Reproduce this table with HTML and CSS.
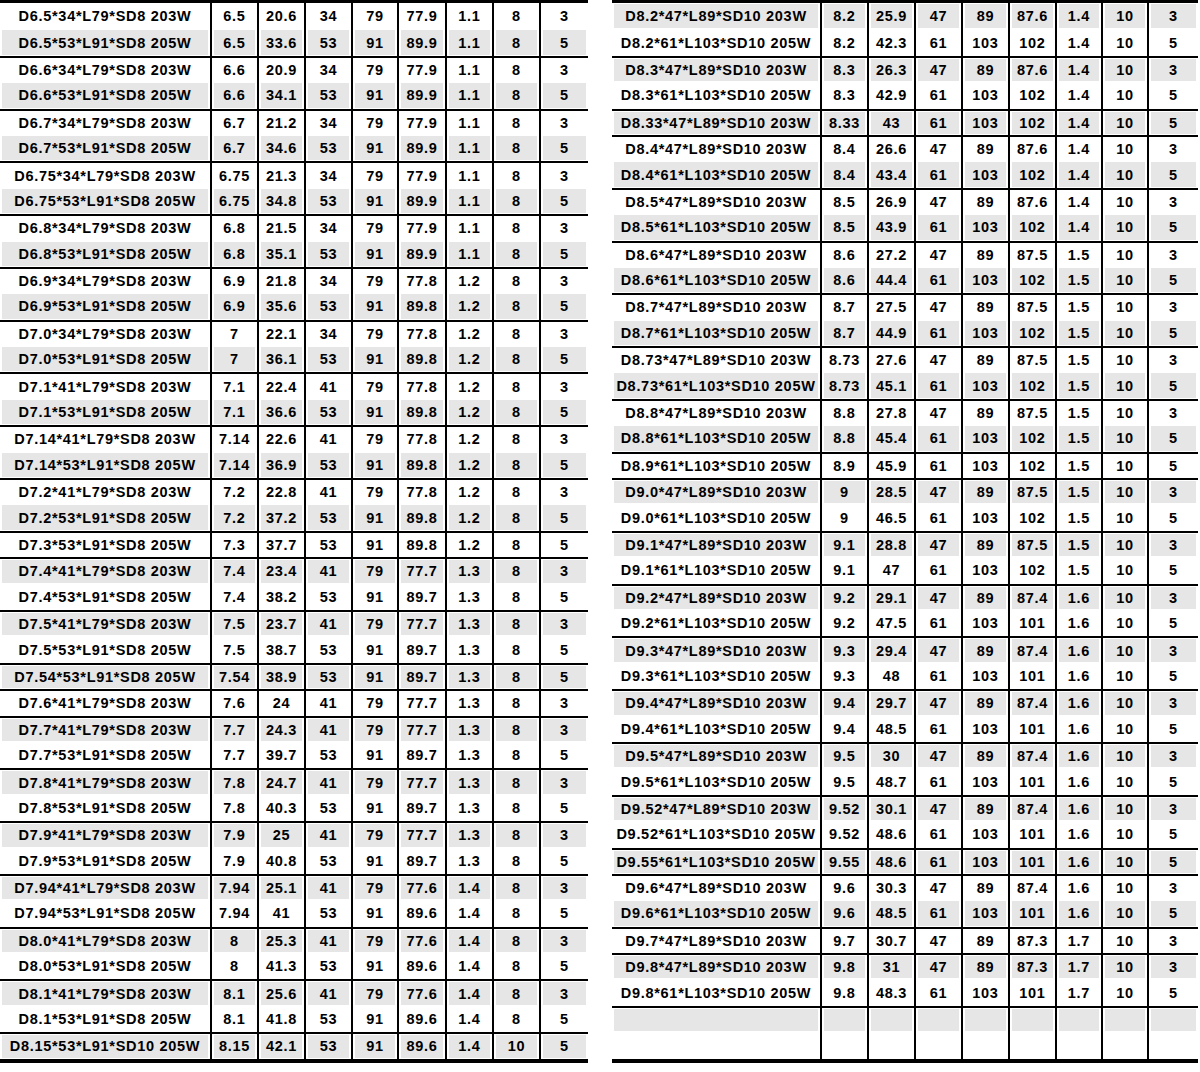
FILE: index.html
```html
<!DOCTYPE html>
<html lang="en">
<head>
<meta charset="utf-8">
<title>Spec table</title>
<link rel="stylesheet" href="styles.css">
</head>
<body>
<div class="page">
<table class="spec spec-left">
<colgroup><col class="c1"><col class="c2"><col class="c3"><col class="c4"><col class="c5"><col class="c6"><col class="c7"><col class="c8"><col class="c9"></colgroup>
<tbody>
<tr><td>D6.5*34*L79*SD8 203W</td><td>6.5</td><td>20.6</td><td>34</td><td>79</td><td>77.9</td><td>1.1</td><td>8</td><td>3</td></tr>
<tr class="s"><td>D6.5*53*L91*SD8 205W</td><td>6.5</td><td>33.6</td><td>53</td><td>91</td><td>89.9</td><td>1.1</td><td>8</td><td>5</td></tr>
<tr class="g"><td>D6.6*34*L79*SD8 203W</td><td>6.6</td><td>20.9</td><td>34</td><td>79</td><td>77.9</td><td>1.1</td><td>8</td><td>3</td></tr>
<tr class="s"><td>D6.6*53*L91*SD8 205W</td><td>6.6</td><td>34.1</td><td>53</td><td>91</td><td>89.9</td><td>1.1</td><td>8</td><td>5</td></tr>
<tr class="g"><td>D6.7*34*L79*SD8 203W</td><td>6.7</td><td>21.2</td><td>34</td><td>79</td><td>77.9</td><td>1.1</td><td>8</td><td>3</td></tr>
<tr class="s"><td>D6.7*53*L91*SD8 205W</td><td>6.7</td><td>34.6</td><td>53</td><td>91</td><td>89.9</td><td>1.1</td><td>8</td><td>5</td></tr>
<tr class="g"><td>D6.75*34*L79*SD8 203W</td><td>6.75</td><td>21.3</td><td>34</td><td>79</td><td>77.9</td><td>1.1</td><td>8</td><td>3</td></tr>
<tr class="s"><td>D6.75*53*L91*SD8 205W</td><td>6.75</td><td>34.8</td><td>53</td><td>91</td><td>89.9</td><td>1.1</td><td>8</td><td>5</td></tr>
<tr class="g"><td>D6.8*34*L79*SD8 203W</td><td>6.8</td><td>21.5</td><td>34</td><td>79</td><td>77.9</td><td>1.1</td><td>8</td><td>3</td></tr>
<tr class="s"><td>D6.8*53*L91*SD8 205W</td><td>6.8</td><td>35.1</td><td>53</td><td>91</td><td>89.9</td><td>1.1</td><td>8</td><td>5</td></tr>
<tr class="g"><td>D6.9*34*L79*SD8 203W</td><td>6.9</td><td>21.8</td><td>34</td><td>79</td><td>77.8</td><td>1.2</td><td>8</td><td>3</td></tr>
<tr class="s"><td>D6.9*53*L91*SD8 205W</td><td>6.9</td><td>35.6</td><td>53</td><td>91</td><td>89.8</td><td>1.2</td><td>8</td><td>5</td></tr>
<tr class="g"><td>D7.0*34*L79*SD8 203W</td><td>7</td><td>22.1</td><td>34</td><td>79</td><td>77.8</td><td>1.2</td><td>8</td><td>3</td></tr>
<tr class="s"><td>D7.0*53*L91*SD8 205W</td><td>7</td><td>36.1</td><td>53</td><td>91</td><td>89.8</td><td>1.2</td><td>8</td><td>5</td></tr>
<tr class="g"><td>D7.1*41*L79*SD8 203W</td><td>7.1</td><td>22.4</td><td>41</td><td>79</td><td>77.8</td><td>1.2</td><td>8</td><td>3</td></tr>
<tr class="s"><td>D7.1*53*L91*SD8 205W</td><td>7.1</td><td>36.6</td><td>53</td><td>91</td><td>89.8</td><td>1.2</td><td>8</td><td>5</td></tr>
<tr class="g"><td>D7.14*41*L79*SD8 203W</td><td>7.14</td><td>22.6</td><td>41</td><td>79</td><td>77.8</td><td>1.2</td><td>8</td><td>3</td></tr>
<tr class="s"><td>D7.14*53*L91*SD8 205W</td><td>7.14</td><td>36.9</td><td>53</td><td>91</td><td>89.8</td><td>1.2</td><td>8</td><td>5</td></tr>
<tr class="g"><td>D7.2*41*L79*SD8 203W</td><td>7.2</td><td>22.8</td><td>41</td><td>79</td><td>77.8</td><td>1.2</td><td>8</td><td>3</td></tr>
<tr class="s"><td>D7.2*53*L91*SD8 205W</td><td>7.2</td><td>37.2</td><td>53</td><td>91</td><td>89.8</td><td>1.2</td><td>8</td><td>5</td></tr>
<tr class="g"><td>D7.3*53*L91*SD8 205W</td><td>7.3</td><td>37.7</td><td>53</td><td>91</td><td>89.8</td><td>1.2</td><td>8</td><td>5</td></tr>
<tr class="g s"><td>D7.4*41*L79*SD8 203W</td><td>7.4</td><td>23.4</td><td>41</td><td>79</td><td>77.7</td><td>1.3</td><td>8</td><td>3</td></tr>
<tr><td>D7.4*53*L91*SD8 205W</td><td>7.4</td><td>38.2</td><td>53</td><td>91</td><td>89.7</td><td>1.3</td><td>8</td><td>5</td></tr>
<tr class="g s"><td>D7.5*41*L79*SD8 203W</td><td>7.5</td><td>23.7</td><td>41</td><td>79</td><td>77.7</td><td>1.3</td><td>8</td><td>3</td></tr>
<tr><td>D7.5*53*L91*SD8 205W</td><td>7.5</td><td>38.7</td><td>53</td><td>91</td><td>89.7</td><td>1.3</td><td>8</td><td>5</td></tr>
<tr class="g s"><td>D7.54*53*L91*SD8 205W</td><td>7.54</td><td>38.9</td><td>53</td><td>91</td><td>89.7</td><td>1.3</td><td>8</td><td>5</td></tr>
<tr class="g"><td>D7.6*41*L79*SD8 203W</td><td>7.6</td><td>24</td><td>41</td><td>79</td><td>77.7</td><td>1.3</td><td>8</td><td>3</td></tr>
<tr class="g s"><td>D7.7*41*L79*SD8 203W</td><td>7.7</td><td>24.3</td><td>41</td><td>79</td><td>77.7</td><td>1.3</td><td>8</td><td>3</td></tr>
<tr><td>D7.7*53*L91*SD8 205W</td><td>7.7</td><td>39.7</td><td>53</td><td>91</td><td>89.7</td><td>1.3</td><td>8</td><td>5</td></tr>
<tr class="g s"><td>D7.8*41*L79*SD8 203W</td><td>7.8</td><td>24.7</td><td>41</td><td>79</td><td>77.7</td><td>1.3</td><td>8</td><td>3</td></tr>
<tr><td>D7.8*53*L91*SD8 205W</td><td>7.8</td><td>40.3</td><td>53</td><td>91</td><td>89.7</td><td>1.3</td><td>8</td><td>5</td></tr>
<tr class="g s"><td>D7.9*41*L79*SD8 203W</td><td>7.9</td><td>25</td><td>41</td><td>79</td><td>77.7</td><td>1.3</td><td>8</td><td>3</td></tr>
<tr><td>D7.9*53*L91*SD8 205W</td><td>7.9</td><td>40.8</td><td>53</td><td>91</td><td>89.7</td><td>1.3</td><td>8</td><td>5</td></tr>
<tr class="g s"><td>D7.94*41*L79*SD8 203W</td><td>7.94</td><td>25.1</td><td>41</td><td>79</td><td>77.6</td><td>1.4</td><td>8</td><td>3</td></tr>
<tr><td>D7.94*53*L91*SD8 205W</td><td>7.94</td><td>41</td><td>53</td><td>91</td><td>89.6</td><td>1.4</td><td>8</td><td>5</td></tr>
<tr class="g s"><td>D8.0*41*L79*SD8 203W</td><td>8</td><td>25.3</td><td>41</td><td>79</td><td>77.6</td><td>1.4</td><td>8</td><td>3</td></tr>
<tr><td>D8.0*53*L91*SD8 205W</td><td>8</td><td>41.3</td><td>53</td><td>91</td><td>89.6</td><td>1.4</td><td>8</td><td>5</td></tr>
<tr class="g s"><td>D8.1*41*L79*SD8 203W</td><td>8.1</td><td>25.6</td><td>41</td><td>79</td><td>77.6</td><td>1.4</td><td>8</td><td>3</td></tr>
<tr><td>D8.1*53*L91*SD8 205W</td><td>8.1</td><td>41.8</td><td>53</td><td>91</td><td>89.6</td><td>1.4</td><td>8</td><td>5</td></tr>
<tr class="g s"><td>D8.15*53*L91*SD10 205W</td><td>8.15</td><td>42.1</td><td>53</td><td>91</td><td>89.6</td><td>1.4</td><td>10</td><td>5</td></tr>
</tbody>
</table>

<table class="spec spec-right">
<colgroup><col class="c1"><col class="c2"><col class="c3"><col class="c4"><col class="c5"><col class="c6"><col class="c7"><col class="c8"><col class="c9"></colgroup>
<tbody>
<tr class="s"><td>D8.2*47*L89*SD10 203W</td><td>8.2</td><td>25.9</td><td>47</td><td>89</td><td>87.6</td><td>1.4</td><td>10</td><td>3</td></tr>
<tr><td>D8.2*61*L103*SD10 205W</td><td>8.2</td><td>42.3</td><td>61</td><td>103</td><td>102</td><td>1.4</td><td>10</td><td>5</td></tr>
<tr class="g s"><td>D8.3*47*L89*SD10 203W</td><td>8.3</td><td>26.3</td><td>47</td><td>89</td><td>87.6</td><td>1.4</td><td>10</td><td>3</td></tr>
<tr><td>D8.3*61*L103*SD10 205W</td><td>8.3</td><td>42.9</td><td>61</td><td>103</td><td>102</td><td>1.4</td><td>10</td><td>5</td></tr>
<tr class="g s"><td>D8.33*47*L89*SD10 203W</td><td>8.33</td><td>43</td><td>61</td><td>103</td><td>102</td><td>1.4</td><td>10</td><td>5</td></tr>
<tr class="g"><td>D8.4*47*L89*SD10 203W</td><td>8.4</td><td>26.6</td><td>47</td><td>89</td><td>87.6</td><td>1.4</td><td>10</td><td>3</td></tr>
<tr class="s"><td>D8.4*61*L103*SD10 205W</td><td>8.4</td><td>43.4</td><td>61</td><td>103</td><td>102</td><td>1.4</td><td>10</td><td>5</td></tr>
<tr class="g"><td>D8.5*47*L89*SD10 203W</td><td>8.5</td><td>26.9</td><td>47</td><td>89</td><td>87.6</td><td>1.4</td><td>10</td><td>3</td></tr>
<tr class="s"><td>D8.5*61*L103*SD10 205W</td><td>8.5</td><td>43.9</td><td>61</td><td>103</td><td>102</td><td>1.4</td><td>10</td><td>5</td></tr>
<tr class="g"><td>D8.6*47*L89*SD10 203W</td><td>8.6</td><td>27.2</td><td>47</td><td>89</td><td>87.5</td><td>1.5</td><td>10</td><td>3</td></tr>
<tr class="s"><td>D8.6*61*L103*SD10 205W</td><td>8.6</td><td>44.4</td><td>61</td><td>103</td><td>102</td><td>1.5</td><td>10</td><td>5</td></tr>
<tr class="g"><td>D8.7*47*L89*SD10 203W</td><td>8.7</td><td>27.5</td><td>47</td><td>89</td><td>87.5</td><td>1.5</td><td>10</td><td>3</td></tr>
<tr class="s"><td>D8.7*61*L103*SD10 205W</td><td>8.7</td><td>44.9</td><td>61</td><td>103</td><td>102</td><td>1.5</td><td>10</td><td>5</td></tr>
<tr class="g"><td>D8.73*47*L89*SD10 203W</td><td>8.73</td><td>27.6</td><td>47</td><td>89</td><td>87.5</td><td>1.5</td><td>10</td><td>3</td></tr>
<tr class="s"><td>D8.73*61*L103*SD10 205W</td><td>8.73</td><td>45.1</td><td>61</td><td>103</td><td>102</td><td>1.5</td><td>10</td><td>5</td></tr>
<tr class="g"><td>D8.8*47*L89*SD10 203W</td><td>8.8</td><td>27.8</td><td>47</td><td>89</td><td>87.5</td><td>1.5</td><td>10</td><td>3</td></tr>
<tr class="s"><td>D8.8*61*L103*SD10 205W</td><td>8.8</td><td>45.4</td><td>61</td><td>103</td><td>102</td><td>1.5</td><td>10</td><td>5</td></tr>
<tr class="g"><td>D8.9*61*L103*SD10 205W</td><td>8.9</td><td>45.9</td><td>61</td><td>103</td><td>102</td><td>1.5</td><td>10</td><td>5</td></tr>
<tr class="g s"><td>D9.0*47*L89*SD10 203W</td><td>9</td><td>28.5</td><td>47</td><td>89</td><td>87.5</td><td>1.5</td><td>10</td><td>3</td></tr>
<tr><td>D9.0*61*L103*SD10 205W</td><td>9</td><td>46.5</td><td>61</td><td>103</td><td>102</td><td>1.5</td><td>10</td><td>5</td></tr>
<tr class="g s"><td>D9.1*47*L89*SD10 203W</td><td>9.1</td><td>28.8</td><td>47</td><td>89</td><td>87.5</td><td>1.5</td><td>10</td><td>3</td></tr>
<tr><td>D9.1*61*L103*SD10 205W</td><td>9.1</td><td>47</td><td>61</td><td>103</td><td>102</td><td>1.5</td><td>10</td><td>5</td></tr>
<tr class="g s"><td>D9.2*47*L89*SD10 203W</td><td>9.2</td><td>29.1</td><td>47</td><td>89</td><td>87.4</td><td>1.6</td><td>10</td><td>3</td></tr>
<tr><td>D9.2*61*L103*SD10 205W</td><td>9.2</td><td>47.5</td><td>61</td><td>103</td><td>101</td><td>1.6</td><td>10</td><td>5</td></tr>
<tr class="g s"><td>D9.3*47*L89*SD10 203W</td><td>9.3</td><td>29.4</td><td>47</td><td>89</td><td>87.4</td><td>1.6</td><td>10</td><td>3</td></tr>
<tr><td>D9.3*61*L103*SD10 205W</td><td>9.3</td><td>48</td><td>61</td><td>103</td><td>101</td><td>1.6</td><td>10</td><td>5</td></tr>
<tr class="g s"><td>D9.4*47*L89*SD10 203W</td><td>9.4</td><td>29.7</td><td>47</td><td>89</td><td>87.4</td><td>1.6</td><td>10</td><td>3</td></tr>
<tr><td>D9.4*61*L103*SD10 205W</td><td>9.4</td><td>48.5</td><td>61</td><td>103</td><td>101</td><td>1.6</td><td>10</td><td>5</td></tr>
<tr class="g s"><td>D9.5*47*L89*SD10 203W</td><td>9.5</td><td>30</td><td>47</td><td>89</td><td>87.4</td><td>1.6</td><td>10</td><td>3</td></tr>
<tr><td>D9.5*61*L103*SD10 205W</td><td>9.5</td><td>48.7</td><td>61</td><td>103</td><td>101</td><td>1.6</td><td>10</td><td>5</td></tr>
<tr class="g s"><td>D9.52*47*L89*SD10 203W</td><td>9.52</td><td>30.1</td><td>47</td><td>89</td><td>87.4</td><td>1.6</td><td>10</td><td>3</td></tr>
<tr><td>D9.52*61*L103*SD10 205W</td><td>9.52</td><td>48.6</td><td>61</td><td>103</td><td>101</td><td>1.6</td><td>10</td><td>5</td></tr>
<tr class="g s"><td>D9.55*61*L103*SD10 205W</td><td>9.55</td><td>48.6</td><td>61</td><td>103</td><td>101</td><td>1.6</td><td>10</td><td>5</td></tr>
<tr class="g"><td>D9.6*47*L89*SD10 203W</td><td>9.6</td><td>30.3</td><td>47</td><td>89</td><td>87.4</td><td>1.6</td><td>10</td><td>3</td></tr>
<tr class="s"><td>D9.6*61*L103*SD10 205W</td><td>9.6</td><td>48.5</td><td>61</td><td>103</td><td>101</td><td>1.6</td><td>10</td><td>5</td></tr>
<tr class="g"><td>D9.7*47*L89*SD10 203W</td><td>9.7</td><td>30.7</td><td>47</td><td>89</td><td>87.3</td><td>1.7</td><td>10</td><td>3</td></tr>
<tr class="g s"><td>D9.8*47*L89*SD10 203W</td><td>9.8</td><td>31</td><td>47</td><td>89</td><td>87.3</td><td>1.7</td><td>10</td><td>3</td></tr>
<tr><td>D9.8*61*L103*SD10 205W</td><td>9.8</td><td>48.3</td><td>61</td><td>103</td><td>101</td><td>1.7</td><td>10</td><td>5</td></tr>
<tr class="g s"><td></td><td></td><td></td><td></td><td></td><td></td><td></td><td></td><td></td></tr>
<tr><td></td><td></td><td></td><td></td><td></td><td></td><td></td><td></td><td></td></tr>
</tbody>
</table>
</div>
</body>
</html>
```
FILE: styles.css
```css
html, body {
  margin: 0;
  padding: 0;
  background: #fff;
}

.page {
  display: flex;
  gap: 24px;
  align-items: flex-start;
}

.spec {
  table-layout: fixed;
  border-collapse: separate;
  border-spacing: 0;
  border-top: 3px solid #000;
  border-bottom: 4px solid #000;
  font-family: "Liberation Sans", Arial, sans-serif;
  font-weight: bold;
  font-size: 14.5px;
  letter-spacing: 0.7px;
  color: #000;
}

.spec-left { width: 588px; }
.spec-right { width: 586px; }

.spec-left .c1 { width: 212px; }
.spec-left .c2, .spec-left .c3, .spec-left .c4 { width: 47px; }
.spec-left .c5 { width: 46px; }
.spec-left .c6 { width: 48px; }
.spec-left .c7, .spec-left .c8, .spec-left .c9 { width: 47px; }

.spec-right .c1 { width: 210px; }
.spec-right .c2, .spec-right .c3, .spec-right .c4, .spec-right .c5, .spec-right .c6 { width: 47px; }
.spec-right .c7, .spec-right .c8 { width: 46px; }
.spec-right .c9 { width: 49px; }

.spec tr {
  height: 26.4px;
}

.spec td {
  padding: 0;
  text-align: center;
  vertical-align: middle;
  line-height: 16px;
  white-space: nowrap;
  overflow: hidden;
  border-right: 2px solid #000;
}

.spec td:last-child {
  border-right: none;
}

.spec tr.g td {
  border-top: 2px solid #000;
}

.spec tr.s td {
  background: #e6e6e6;
  box-shadow: inset 2px 0 0 #fff, inset -2px 0 0 #fff, inset 0 1px 0 #fff, inset 0 -1px 0 #fff;
}
```
